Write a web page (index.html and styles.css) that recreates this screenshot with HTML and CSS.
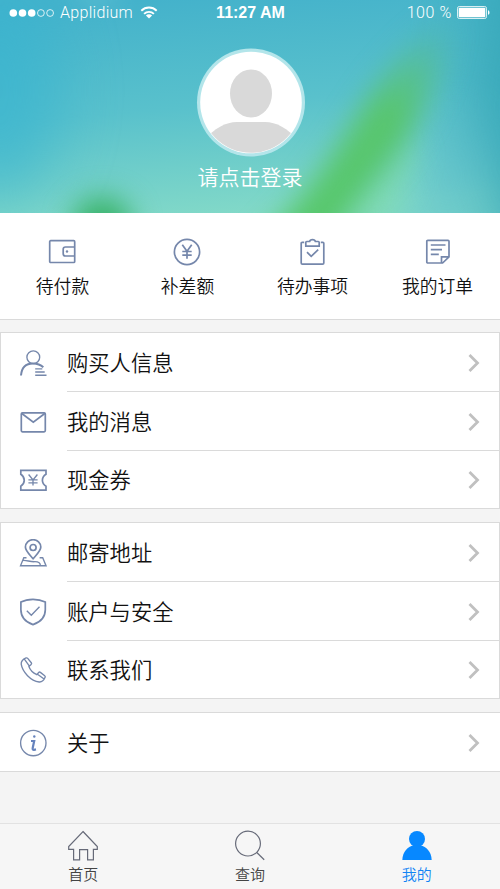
FILE: index.html
```html
<!DOCTYPE html>
<html lang="zh-CN">
<head>
<meta charset="utf-8">
<title>我的</title>
<link rel="stylesheet" href="styles.css">
</head>
<body>
<div class="app">
  <header class="hero">
    <svg class="hero-bg" viewBox="0 0 500 213" preserveAspectRatio="none">
      <defs>
        <linearGradient id="base" x1=".3" y1="0" x2=".5" y2="1">
          <stop offset="0" stop-color="#44b2cb"/><stop offset=".5" stop-color="#59c1cc"/><stop offset="1" stop-color="#82d9c8"/>
        </linearGradient>
        <linearGradient id="streak" gradientUnits="userSpaceOnUse" x1="300" y1="213" x2="440" y2="15">
          <stop offset="0" stop-color="#57c76b"/><stop offset=".55" stop-color="#58c56d"/><stop offset=".75" stop-color="#56c083" stop-opacity=".75"/><stop offset="1" stop-color="#4ab3a8" stop-opacity=".15"/>
        </linearGradient>
        <filter id="b13" color-interpolation-filters="sRGB" x="-80%" y="-80%" width="260%" height="260%"><feGaussianBlur stdDeviation="14"/></filter>
        <filter id="b30" color-interpolation-filters="sRGB" x="-80%" y="-80%" width="260%" height="260%"><feGaussianBlur stdDeviation="30"/></filter>
      </defs>
      <rect width="500" height="213" fill="url(#base)"/>
      <ellipse cx="0" cy="90" rx="60" ry="110" fill="#38b4d0" opacity=".65" filter="url(#b30)"/>
      <path d="M490 -60H580V270H510L460 120Z" fill="#35a6b8" opacity=".9" filter="url(#b30)"/>
      <path d="M410 220L450 90L480 130L470 240Z" fill="#55b9cf" opacity=".7" filter="url(#b30)"/>
      <path d="M320 250L400 140L420 150L380 250Z" fill="#80dcae" opacity=".6" filter="url(#b13)"/>
      <path d="M235 265C335 175 350 115 395 65C415 40 435 25 450 5C458 45 432 95 412 130C390 170 345 210 320 265Z" fill="url(#streak)" filter="url(#b13)"/>
      <ellipse cx="102" cy="225" rx="30" ry="28" fill="#38b268" filter="url(#b13)"/>
      <ellipse cx="97" cy="-5" rx="20" ry="6" fill="#8bd5df" opacity=".7" filter="url(#b13)"/>
    </svg>
    <div class="status">
      <div class="status-side">
        <svg width="46" height="12" viewBox="0 0 46 12"><g fill="#fff"><circle cx="4.3" cy="6" r="3.8"/><circle cx="13.5" cy="6" r="3.8"/><circle cx="22.7" cy="6" r="3.8"/></g><g fill="none" stroke="#fff" stroke-width=".8"><circle cx="31.9" cy="6" r="3.4"/><circle cx="41.1" cy="6" r="3.4"/></g></svg>
        <span class="carrier">Applidium</span>
        <svg class="wifi" width="18" height="13" viewBox="0 0 18 13"><g fill="none" stroke="#fff" stroke-width="1.9"><path d="M1.3 4.7A11 11 0 0 1 16.7 4.7"/><path d="M4.1 7.9A7 7 0 0 1 13.9 7.9"/></g><path d="M9 12.6L5.9 9.5A4.4 4.4 0 0 1 12.1 9.5Z" fill="#fff"/></svg>
      </div>
      <span class="time">11:27 AM</span>
      <div class="status-side status-right">
        <span class="percent">100 %</span>
        <svg width="33" height="13" viewBox="0 0 33 13"><rect x=".5" y=".5" width="29" height="12" rx="1.8" fill="none" stroke="#fff" stroke-width=".8"/><rect x="1.7" y="1.7" width="26.6" height="9.6" rx=".8" fill="#fff"/><path d="M31 4.2C33 4.8 33 8.2 31 8.8Z" fill="#fff"/></svg>
      </div>
    </div>
    <svg class="avatar" width="110" height="110" viewBox="0 0 110 110">
      <defs><clipPath id="face"><circle cx="55" cy="55.5" r="50.3"/></clipPath></defs>
      <circle cx="55" cy="55.5" r="54" fill="#b3e5ea"/>
      <circle cx="55" cy="55.5" r="50.8" fill="#fff"/>
      <g fill="#d9d9d9" clip-path="url(#face)"><ellipse cx="55" cy="46.5" rx="21" ry="24"/><path d="M8 94C18 81 30 75 41 75H69C80 75 92 81 102 94V110H8Z"/></g>
    </svg>
    <div class="login">请点击登录</div>
  </header>

  <nav class="quick">
    <a class="quick-item"><svg class="line nudge" width="28" height="28" viewBox="0 0 28 28"><rect x="1.7" y="2.7" width="25" height="21.8" rx="1"/><path d="M26.5 9H17.5Q15.2 9 15.2 11.3V15.7Q15.2 18 17.5 18H26.5" /><circle class="solid" cx="19" cy="13.5" r="1.2"/></svg><span>待付款</span></a>
    <a class="quick-item"><svg class="line nudge" width="28" height="28" viewBox="0 0 28 28"><circle cx="14" cy="14" r="12.6"/><path d="M9.3 6.8L14 13.2L18.7 6.8M14 13.2V20.8M9.3 13.5H18.7M9.3 17.2H18.7"/></svg><span>补差额</span></a>
    <a class="quick-item"><svg class="line" width="28" height="28" viewBox="0 0 28 28"><path d="M5.2 4.3H3.2Q2.2 4.3 2.2 5.3V25Q2.2 26.2 3.4 26.2H23.6Q24.8 26.2 24.8 25V5.3Q24.8 4.3 23.8 4.3H21.8"/><path d="M6.8 8.2V4.4Q6.8 3.5 7.8 3.5H10.6Q11 1.6 13.5 1.6T16.4 3.5H19.2Q20.2 3.5 20.2 4.4V8.2Z"/><path d="M8 14.2L12.2 18.4L19.2 11.7"/></svg><span>待办事项</span></a>
    <a class="quick-item"><svg class="line" width="28" height="28" viewBox="0 0 28 28"><path d="M3.8 2.3H24Q25 2.3 25 3.3V18.8L18.6 25H3.8Q2.8 25 2.8 24V3.3Q2.8 2.3 3.8 2.3ZM25 18.8H17.5V25M6.8 7H21.5M6.8 11.7H18M6.8 16.3H14.8"/></svg><span>我的订单</span></a>
  </nav>

  <section class="group">
    <a class="row"><svg class="line" width="28" height="28" viewBox="0 0 28 28"><circle class="fine" cx="14.3" cy="8.2" r="6.4"/><path class="heavy" d="M2 26.5C2.6 18.5 7.2 14.4 14 14.4C18.5 14.4 21.7 15.7 24.3 18.3"/><path class="fine" d="M16.2 19.9H23.3M16.2 23H25.7M16.2 26.2H27.5"/></svg><span class="label">购买人信息</span><svg class="chevron" width="12" height="18" viewBox="0 0 12 18"><path d="M1.5 1L9.5 9L1.5 17"/></svg></a>
    <a class="row"><svg class="line" width="28" height="28" viewBox="0 0 28 28"><rect x="2.3" y="4.8" width="24" height="19" rx="1.2"/><path d="M2.5 5.2L14.3 14.2L26.1 5.2"/></svg><span class="label">我的消息</span><svg class="chevron" width="12" height="18" viewBox="0 0 12 18"><path d="M1.5 1L9.5 9L1.5 17"/></svg></a>
    <a class="row"><svg class="line" width="28" height="28" viewBox="0 0 28 28"><path d="M1.8 4.4H27V8.2C22.2 11.2 22.2 17.2 27 20.2V24.2H1.8V20.2C6.4 17.2 6.4 11.2 1.8 8.2Z"/><path class="fine" d="M9.6 8.5L14 13.9L18.4 8.5M14 13.9V19.6M9.4 13.9H18.6M9.4 16.8H18.6"/></svg><span class="label">现金券</span><svg class="chevron" width="12" height="18" viewBox="0 0 12 18"><path d="M1.5 1L9.5 9L1.5 17"/></svg></a>
  </section>

  <section class="group">
    <a class="row"><svg class="line" width="28" height="28" viewBox="0 0 28 28"><path d="M14.1 19.7C10 15 6.4 11.9 6.4 8.1A7.7 7.4 0 0 1 21.8 8.1C21.8 11.9 18.2 15 14.1 19.7Z"/><circle cx="14.1" cy="8.5" r="3"/><path class="fine" d="M7.5 18.7H4.8L1.5 26.7H27L23.7 18.7H20.6M3.6 21.5C8 21 10 22.8 15.5 22.7C20 22.6 21.4 24.3 21.3 26.5"/></svg><span class="label">邮寄地址</span><svg class="chevron" width="12" height="18" viewBox="0 0 12 18"><path d="M1.5 1L9.5 9L1.5 17"/></svg></a>
    <a class="row"><svg class="line" width="28" height="28" viewBox="0 0 28 28"><path d="M14 1.3C18.5 1.3 22.5 2.1 26.3 4.1V11.7C26.3 19.2 21 24.2 14 26.6C7 24.2 1.9 19.2 1.9 11.7V4.1C5.5 2.1 9.5 1.3 14 1.3Z"/><path class="fine" d="M7.8 12.7L12.3 17.2L20.5 8.7"/></svg><span class="label">账户与安全</span><svg class="chevron" width="12" height="18" viewBox="0 0 12 18"><path d="M1.5 1L9.5 9L1.5 17"/></svg></a>
    <a class="row"><svg class="line" width="28" height="28" viewBox="0 0 28 28"><path class="fine" d="M7.1 1.9Q8 1.6 8.7 2.4L12.3 6.7Q13 7.6 12.1 8.5L9.9 10.4C11 13.5 14.8 17.2 17.8 18.6L19.7 16.5Q20.4 15.7 21.4 16.4L25.7 19.7Q26.6 20.4 26.1 21.3C24.9 24.2 22.7 26.2 20.2 26C11.8 24.8 3.5 16.2 2.2 8.2C2 5.5 4.2 3.1 7.1 1.9ZM5.2 2.9L10.2 9.8M18.5 18.2L25.1 23"/></svg><span class="label">联系我们</span><svg class="chevron" width="12" height="18" viewBox="0 0 12 18"><path d="M1.5 1L9.5 9L1.5 17"/></svg></a>
  </section>

  <section class="group group-flush">
    <a class="row"><svg class="line" width="28" height="28" viewBox="0 0 28 28"><circle class="fine" cx="14.3" cy="14" r="12.7"/><circle class="solid-blue" cx="15.3" cy="7.5" r="1.2"/><path class="blue" d="M12 12H15.2L13.7 19Q13.3 20.9 15 20.8L17 20.4"/></svg><span class="label">关于</span><svg class="chevron" width="12" height="18" viewBox="0 0 12 18"><path d="M1.5 1L9.5 9L1.5 17"/></svg></a>
  </section>

  <nav class="tabs">
    <a class="tab"><svg width="32" height="32" viewBox="0 0 32 32"><path d="M16 1.5L30.3 16.5V19.3H26.4V29.8H20.6V19.6H12.6V29.8H6.6V19.3H1.7V16.5Z"/></svg><span>首页</span></a>
    <a class="tab"><svg width="32" height="32" viewBox="0 0 32 32"><circle cx="14" cy="13.6" r="12.4"/><path d="M22.8 22.5L30.2 29.7"/></svg><span>查询</span></a>
    <a class="tab active"><svg width="32" height="32" viewBox="0 0 32 32"><circle cx="16" cy="9" r="8"/><path d="M1.3 30C1.6 21.5 7 16.5 12.3 15.5H19.7C25 16.5 30.4 21.5 30.7 30Z"/></svg><span>我的</span></a>
  </nav>
</div>
</body>
</html>
```
FILE: styles.css
```css
* { box-sizing: border-box; }
body { margin: 0; background: #f4f4f4; font-family: "Noto Sans CJK SC", sans-serif; font-weight: 350; color: #111; }
.app { width: 500px; height: 889px; display: flex; flex-direction: column; overflow: hidden; }
svg { display: block; flex: none; }

.hero { position: relative; height: 213px; flex: none; display: flex; flex-direction: column; align-items: center; color: #fff; overflow: hidden; }
.hero-bg { position: absolute; inset: 0; width: 100%; height: 100%; }
.status { position: relative; width: 100%; height: 25px; padding: 0 10px 0 9px; display: grid; grid-template-columns: 1fr auto 1fr; align-items: center; font-family: Roboto, "Liberation Sans", sans-serif; font-size: 16px; line-height: 24px; }
.status-side { display: flex; align-items: center; }
.status-right { justify-content: flex-end; gap: 5px; }
.carrier { margin-left: 5px; font-weight: 300; letter-spacing: .3px; }
.wifi { margin-left: 7px; }
.time { margin-left: 2px; font-family: "Liberation Sans", sans-serif; font-weight: 700; font-size: 16px; }
.percent { font-weight: 300; letter-spacing: .6px; }
.avatar { position: relative; margin: 22px 0 0 1px; }
.login { position: relative; margin-top: 3px; font-size: 21px; line-height: 32px; }

.quick { height: 107px; flex: none; display: grid; grid-template-columns: repeat(4, 1fr); background: #fff; border-bottom: 1px solid #dadada; padding-top: 25px; }
.quick-item { display: flex; flex-direction: column; align-items: center; gap: 6px; font-size: 17.8px; line-height: 26px; }
.quick .nudge { margin-right: 2px; }
.line { fill: none; stroke: #7587ab; stroke-width: 1.7; }
.line .fine { stroke-width: 1.35; }
.line .heavy { stroke-width: 2; }
.line .solid { fill: #7587ab; stroke: none; }
.line .blue { stroke: #6683bd; stroke-width: 2.2; }
.line .solid-blue { fill: #6683bd; stroke: none; }

.group { flex: none; margin-top: 12px; height: 177px; display: flex; flex-direction: column; background: #fff; border: 1px solid #dadada; }
.group + .group { margin-top: 13px; }
.group-flush { height: 60px; border-width: 1px 0; }
.row { position: relative; flex: none; height: 59px; display: flex; align-items: center; padding: 0 19px 0 18px; }
.row:last-child { height: 57px; padding-top: 1px; }
.group-flush .row { height: 58px; padding: 1px 20px 0 19px; }
.row:not(:last-child)::after { content: ""; position: absolute; left: 66px; right: 0; bottom: 0; height: 1px; background: #dadada; }
.label { flex: 1; margin-left: 20px; padding-bottom: 2px; font-size: 21.3px; line-height: 32px; }
.chevron { fill: none; stroke: #c0c0c0; stroke-width: 2.8; }

.tabs { margin-top: auto; height: 66px; flex: none; display: grid; grid-template-columns: repeat(3, 1fr); background: #f6f6f6; border-top: 1px solid #e2e2e2; padding-top: 6px; }
.tab { display: flex; flex-direction: column; align-items: center; font-size: 15px; line-height: 22px; gap: 1px; color: #444; }
.tab svg { fill: none; stroke: #666a78; stroke-width: 1.2; }
.tab.active { color: #1284f4; }
.tab.active svg { fill: #0788ff; stroke: none; }
```
